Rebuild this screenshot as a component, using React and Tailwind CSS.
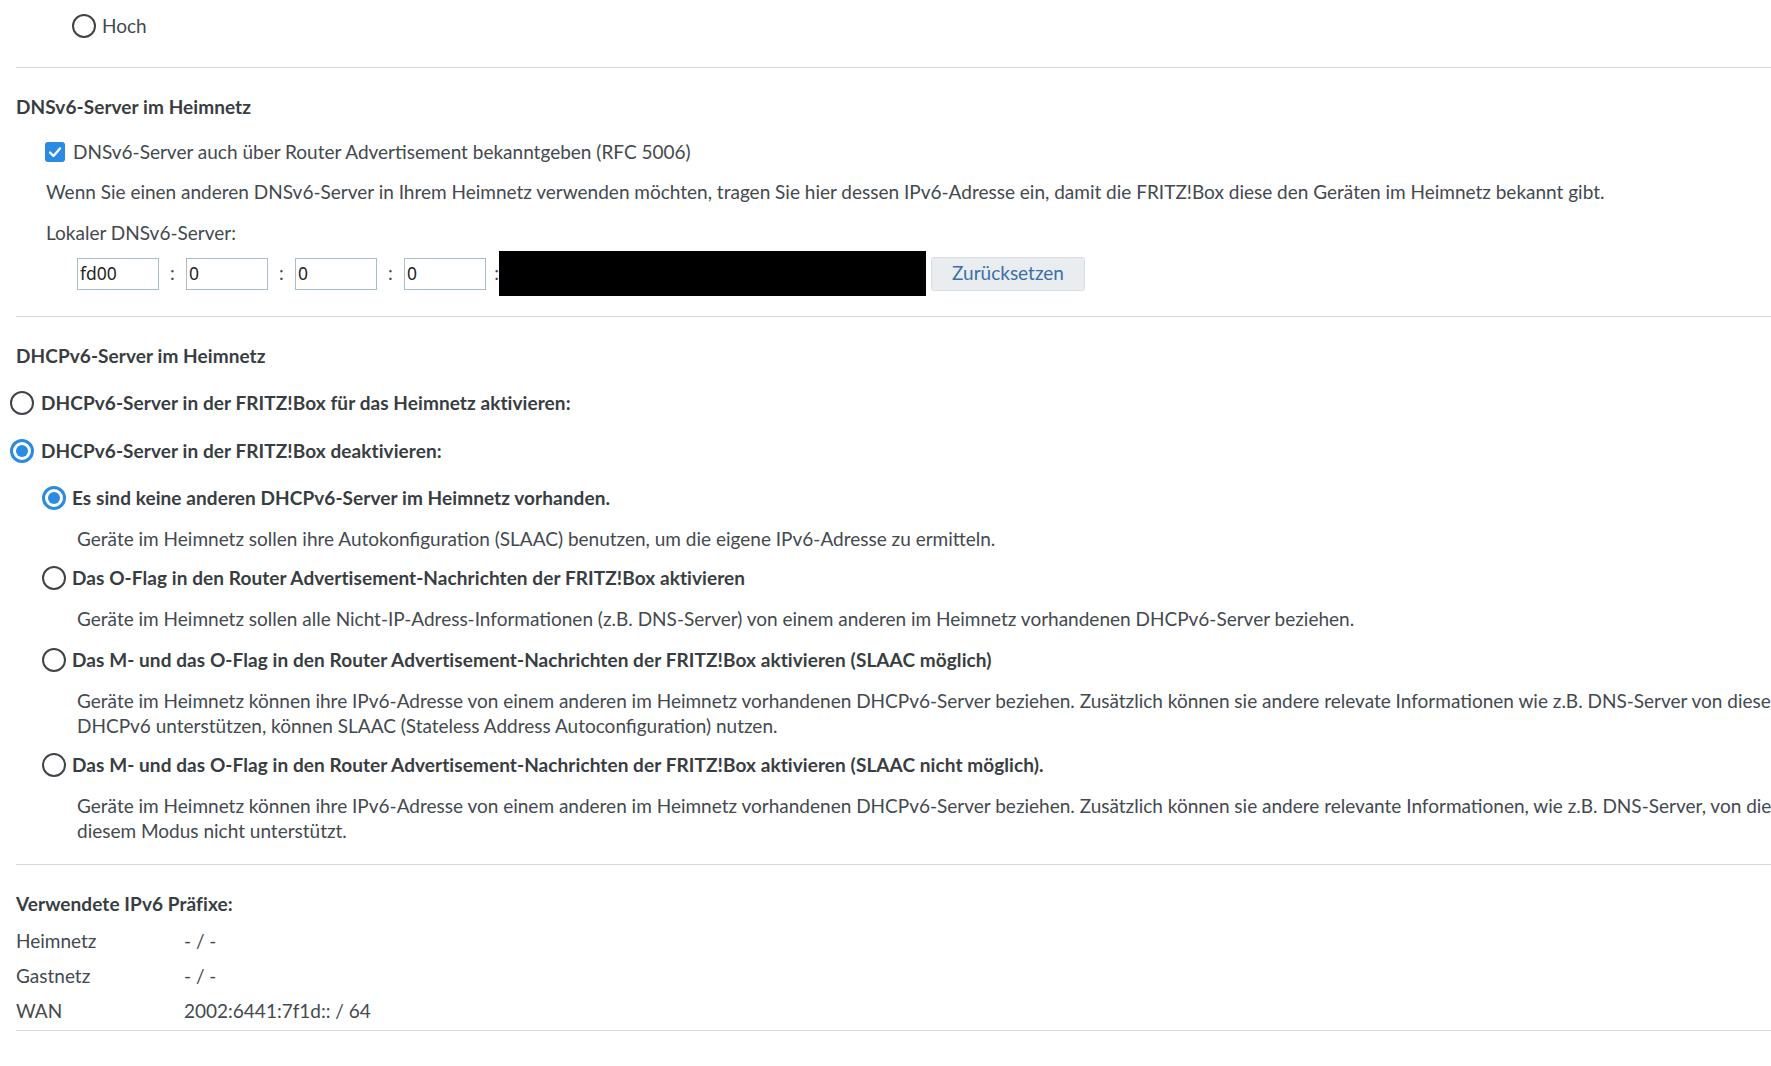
import React from "react";

const Radio = ({ checked }) =>
  checked ? (
    <span className="w-[24px] h-[24px] rounded-full border-[3px] border-[#2b8ae2] flex items-center justify-center shrink-0">
      <span className="w-[12px] h-[12px] rounded-full bg-[#2b8ae2]" />
    </span>
  ) : (
    <span className="w-[24px] h-[24px] rounded-full border-[2.5px] border-[#3f4448] shrink-0" />
  );

const Checkbox = () => (
  <span className="w-[20px] h-[20px] rounded-[3px] bg-[#2b8ae2] flex items-center justify-center shrink-0">
    <svg width="16" height="16" viewBox="0 0 16 16">
      <polyline points="3,8.5 6.5,12 13,4.5" fill="none" stroke="#fff" strokeWidth="2.4" strokeLinecap="round" strokeLinejoin="round" />
    </svg>
  </span>
);

const Field = ({ value }) => (
  <div className="w-[82px] h-[32px] border border-[#a9bec7] flex items-center pl-[2px] font-['Noto_Sans',sans-serif] text-[17.5px] text-[#1f1f1f] bg-white">
    {value}
  </div>
);

const Colon = () => <span className="w-[27px] text-center text-[#43494f]">:</span>;

const Hr = ({ className }) => <div className={"h-px bg-[#d9d9d9] " + className} />;

export default function App() {
  return (
    <div className="w-full min-h-screen overflow-hidden bg-white">
      <div className="w-[2200px] pl-[16px] font-['Lato',sans-serif] text-[19px] text-[#43494f] whitespace-nowrap">
        <div className="h-[52px] flex items-center pl-[56px] gap-[6px]">
          <Radio />
          <span>Hoch</span>
        </div>
        <Hr className="mt-[15px]" />

        <div className="mt-[24px] h-[30px] flex items-center font-bold tracking-[0.08px] text-[#383d42]">DNSv6-Server im Heimnetz</div>
        <div className="mt-[15px] h-[30px] flex items-center pl-[29px] gap-[8px]">
          <Checkbox />
          <span>DNSv6-Server auch über Router Advertisement bekanntgeben (RFC 5006)</span>
        </div>
        <div className="mt-[10px] h-[30px] flex items-center pl-[30px]">
          Wenn Sie einen anderen DNSv6-Server in Ihrem Heimnetz verwenden möchten, tragen Sie hier dessen IPv6-Adresse ein, damit die FRITZ!Box diese den Geräten im Heimnetz bekannt gibt.
        </div>
        <div className="mt-[11px] h-[30px] flex items-center pl-[30px]">Lokaler DNSv6-Server:</div>
        <div className="mt-[3px] h-[45px] flex items-center pl-[61px]">
          <Field value="fd00" />
          <Colon />
          <Field value="0" />
          <Colon />
          <Field value="0" />
          <Colon />
          <Field value="0" />
          <span className="w-[13px] text-right">:</span>
          <div className="w-[427px] h-[45px] bg-black" />
          <div className="ml-[5px] w-[154px] h-[34px] bg-[#e9edf0] border border-[#d8dee3] rounded-[3px] flex items-center justify-center text-[#3c6fa9]">
            Zurücksetzen
          </div>
        </div>
        <Hr className="mt-[20px]" />

        <div className="mt-[24px] h-[30px] flex items-center font-bold tracking-[0.08px] text-[#383d42]">DHCPv6-Server im Heimnetz</div>
        <div className="mt-[17px] h-[30px] flex items-center -ml-[6px] gap-[7px] font-bold tracking-[0.08px] text-[#383d42]">
          <Radio />
          <span>DHCPv6-Server in der FRITZ!Box für das Heimnetz aktivieren:</span>
        </div>
        <div className="mt-[18px] h-[30px] flex items-center -ml-[6px] gap-[7px] font-bold tracking-[0.08px] text-[#383d42]">
          <Radio checked />
          <span>DHCPv6-Server in der FRITZ!Box deaktivieren:</span>
        </div>

        <div className="mt-[17px] h-[30px] flex items-center pl-[26px] gap-[6px] font-bold tracking-[0.08px] text-[#383d42]">
          <Radio checked />
          <span>Es sind keine anderen DHCPv6-Server im Heimnetz vorhanden.</span>
        </div>
        <div className="mt-[11px] h-[30px] flex items-center pl-[61px]">
          Geräte im Heimnetz sollen ihre Autokonfiguration (SLAAC) benutzen, um die eigene IPv6-Adresse zu ermitteln.
        </div>

        <div className="mt-[9px] h-[30px] flex items-center pl-[26px] gap-[6px] font-bold tracking-[0.08px] text-[#383d42]">
          <Radio />
          <span>Das O-Flag in den Router Advertisement-Nachrichten der FRITZ!Box aktivieren</span>
        </div>
        <div className="mt-[11px] h-[30px] flex items-center pl-[61px]">
          Geräte im Heimnetz sollen alle Nicht-IP-Adress-Informationen (z.B. DNS-Server) von einem anderen im Heimnetz vorhandenen DHCPv6-Server beziehen.
        </div>

        <div className="mt-[11px] h-[30px] flex items-center pl-[26px] gap-[6px] font-bold tracking-[0.08px] text-[#383d42]">
          <Radio />
          <span>Das M- und das O-Flag in den Router Advertisement-Nachrichten der FRITZ!Box aktivieren (SLAAC möglich)</span>
        </div>
        <div className="mt-[13px] pl-[61px] leading-[25px]">
          <div>Geräte im Heimnetz können ihre IPv6-Adresse von einem anderen im Heimnetz vorhandenen DHCPv6-Server beziehen. Zusätzlich können sie andere relevate Informationen wie z.B. DNS-Server von diesem DHCPv6-Server beziehen. Geräte, die kein</div>
          <div>DHCPv6 unterstützen, können SLAAC (Stateless Address Autoconfiguration) nutzen.</div>
        </div>

        <div className="mt-[12px] h-[30px] flex items-center pl-[26px] gap-[6px] font-bold tracking-[0.08px] text-[#383d42]">
          <Radio />
          <span>Das M- und das O-Flag in den Router Advertisement-Nachrichten der FRITZ!Box aktivieren (SLAAC nicht möglich).</span>
        </div>
        <div className="mt-[13px] pl-[61px] leading-[25px]">
          <div>Geräte im Heimnetz können ihre IPv6-Adresse von einem anderen im Heimnetz vorhandenen DHCPv6-Server beziehen. Zusätzlich können sie andere relevante Informationen, wie z.B. DNS-Server, von diesem DHCPv6-Server beziehen. SLAAC wird in</div>
          <div>diesem Modus nicht unterstützt.</div>
        </div>
        <Hr className="mt-[21px]" />

        <div className="mt-[24px] h-[30px] flex items-center font-bold tracking-[0.08px] text-[#383d42]">Verwendete IPv6 Präfixe:</div>
        <div className="mt-[5px]">
          <div className="h-[35px] flex items-center">
            <span className="w-[168px]">Heimnetz</span>
            <span>- / -</span>
          </div>
          <div className="h-[35px] flex items-center">
            <span className="w-[168px]">Gastnetz</span>
            <span>- / -</span>
          </div>
          <div className="h-[35px] flex items-center">
            <span className="w-[168px]">WAN</span>
            <span>2002:6441:7f1d:: / 64</span>
          </div>
        </div>
        <Hr className="mt-[1px]" />
      </div>
    </div>
  );
}
